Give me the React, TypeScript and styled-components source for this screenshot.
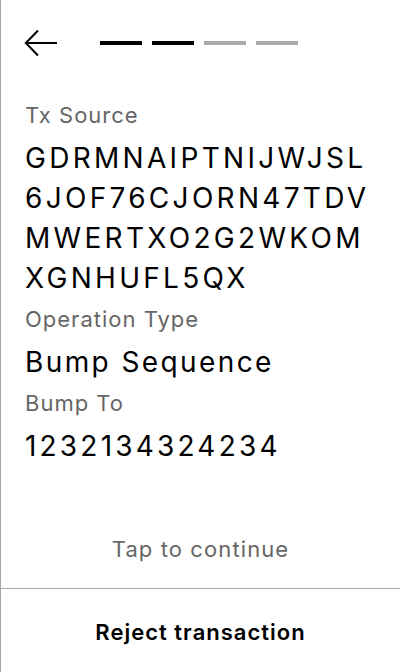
import React from "react";
import styled, { createGlobalStyle } from "styled-components";

const Global = createGlobalStyle`
  html, body { margin: 0; padding: 0; background: #fff; }
  body { font-family: Inter, "Noto Sans", sans-serif; }
`;

const Page = styled.div`
  box-sizing: border-box;
  height: 672px;
  width: 400px;
  border-left: 1px solid #a8a8a8;
  display: flex;
  flex-direction: column;
  background: #fff;
`;

const Header = styled.div`
  height: 86px;
  display: flex;
  align-items: center;
  padding-left: 23px;
  gap: 42px;
`;

const BackButton = styled.button`
  border: none;
  background: none;
  padding: 0;
  width: 34px;
  height: 28px;
  display: flex;
  cursor: pointer;
`;

const Steps = styled.div`
  display: flex;
  gap: 10px;
`;

const Step = styled.div<{ $done: boolean }>`
  width: 42px;
  height: 3.5px;
  background: ${(p) => (p.$done ? "#000" : "#aaaaaa")};
`;

const Content = styled.div`
  flex: 1;
  padding: 15px 24px 0 24px;
  display: flex;
  flex-direction: column;
`;

const Label = styled.div`
  font-size: 22px;
  line-height: 28px;
  letter-spacing: 1px;
  color: #666;
`;

const Value = styled.div<{ $tracking: number }>`
  font-size: 28px;
  line-height: 40px;
  letter-spacing: ${(p) => p.$tracking}px;
  color: #000;
  margin-top: 9px;
  margin-bottom: 7px;
  word-break: break-all;
`;

const Hint = styled.div`
  text-align: center;
  font-size: 22px;
  line-height: 28px;
  letter-spacing: 1.1px;
  color: #666;
  margin-bottom: 25px;
`;

const Footer = styled.button`
  height: 84px;
  padding: 3px 0 0 0;
  border: none;
  border-top: 1px solid #a8a8a8;
  background: #fff;
  font-family: Inter, "Noto Sans", sans-serif;
  font-size: 22px;
  font-weight: 600;
  letter-spacing: 1px;
  color: #000;
  cursor: pointer;
`;

const fields = [
  { label: "Tx Source", value: "GDRMNAIPTNIJWJSL6JOF76CJORN47TDVMWERTXO2G2WKOMXGNHUFL5QX", tracking: 3.3 },
  { label: "Operation Type", value: "Bump Sequence", tracking: 2.4 },
  { label: "Bump To", value: "1232134324234", tracking: 3.2 },
];

export default function App() {
  return (
    <>
      <Global />
      <Page>
        <Header>
          <BackButton aria-label="Back">
            <svg width="34" height="28" viewBox="0 0 34 28" fill="none">
              <path d="M2 14 H33 M14 1.5 L1.8 14 L14 26.5" stroke="#000" strokeWidth="2" />
            </svg>
          </BackButton>
          <Steps>
            {[true, true, false, false].map((d, i) => (
              <Step key={i} $done={d} />
            ))}
          </Steps>
        </Header>
        <Content>
          {fields.map((f) => (
            <React.Fragment key={f.label}>
              <Label>{f.label}</Label>
              <Value $tracking={f.tracking}>{f.value}</Value>
            </React.Fragment>
          ))}
        </Content>
        <Hint>Tap to continue</Hint>
        <Footer>Reject transaction</Footer>
      </Page>
    </>
  );
}
